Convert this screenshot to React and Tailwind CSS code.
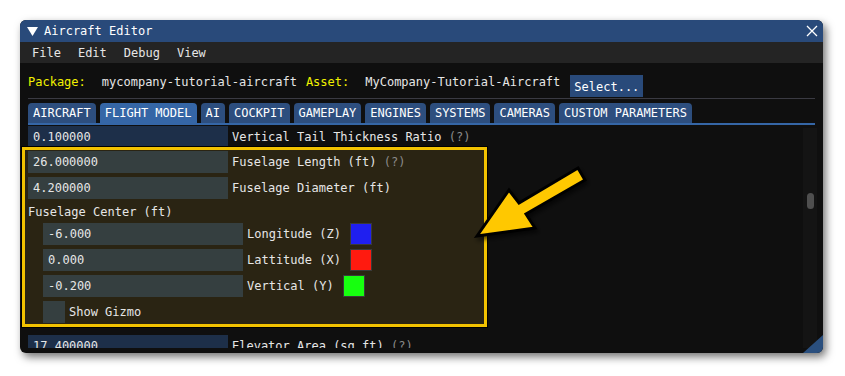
import React from 'react';

const mono = { fontFamily: '"DejaVu Sans Mono", "Liberation Mono", monospace' };

const tabs = ['AIRCRAFT', 'FLIGHT MODEL', 'AI', 'COCKPIT', 'GAMEPLAY', 'ENGINES', 'SYSTEMS', 'CAMERAS', 'CUSTOM PARAMETERS'];

const Field = ({ value, tone = 'navy', width = 'w-[200px]' }) => (
  <div
    className={`${width} h-[22px] shrink-0 flex items-center pl-[5px] ${tone === 'navy' ? 'bg-[#1d2f49]' : 'bg-[#353f40]'}`}
  >
    {value}
  </div>
);

const Help = () => <span className="text-[#8a8a8a]"> (?)</span>;

const Swatch = ({ color }) => (
  <div className={`w-[22px] h-[22px] ml-[9px] border border-[#3a3a3a] ${color}`} />
);

const App = () => {
  return (
    <div className="relative w-[845px] h-[376px] bg-white overflow-hidden text-[12px] text-[#e6e6e6]" style={mono}>
      <div className="absolute left-[20px] top-[20px] w-[803px] h-[333px] rounded-[6px] bg-[#0f0f0f] overflow-hidden flex flex-col shadow-[3px_4px_8px_rgba(0,0,0,0.55)]">
        {/* title bar */}
        <div className="h-[22px] shrink-0 bg-[#294a7a] flex items-center pl-[7px] pr-[5px]">
          <svg width="11" height="9" viewBox="0 0 11 9" className="mr-[6px]">
            <polygon points="0,0 11,0 5.5,9" fill="#ffffff" />
          </svg>
          <span className="text-white">Aircraft Editor</span>
          <div className="flex-1" />
          <svg width="12" height="12" viewBox="0 0 12 12">
            <path d="M1 1 L11 11 M11 1 L1 11" stroke="#ffffff" strokeWidth="1.3" />
          </svg>
        </div>

        {/* menu bar */}
        <div className="h-[21px] shrink-0 bg-[#242424] flex items-center pl-[12px] gap-[17px]">
          <span>File</span>
          <span>Edit</span>
          <span>Debug</span>
          <span>View</span>
        </div>

        {/* package row */}
        <div className="h-[35px] shrink-0 flex items-start pt-[12px] pl-[8px] leading-[14px]">
          <span className="text-[#f2f200]">Package:</span>
          <span className="ml-[16px]">mycompany-tutorial-aircraft</span>
          <span className="ml-[9px] text-[#f2f200]">Asset:</span>
          <span className="ml-[16px]">MyCompany-Tutorial-Aircraft</span>
          <div className="ml-[10px] h-[22px] px-[4px] bg-[#294a7a] flex items-start pt-[5px] text-white">Select...</div>
        </div>

        <div className="mx-[8px] h-px shrink-0 bg-[#3a3a42]" />

        {/* tabs */}
        <div className="mt-[4px] mx-[8px] h-[20px] shrink-0 flex gap-[4px]">
          {tabs.map((t) => (
            <div
              key={t}
              className={`h-full px-[5px] rounded-t-[4px] flex items-center leading-none text-white ${
                t === 'FLIGHT MODEL' ? 'bg-[#3566a6]' : 'bg-[#2d4e7e]'
              }`}
            >
              {t}
            </div>
          ))}
        </div>
        <div className="mx-[8px] h-[2px] shrink-0 bg-[#3566a6]" />

        {/* scrolling content */}
        <div className="h-[223px] shrink-0 flex">
          <div className="flex-1 overflow-hidden pl-[8px] pt-[1px] flex flex-col">
            <div className="flex items-center h-[21px] shrink-0">
              <Field value="0.100000" />
              <span className="ml-[4px]">
                Vertical Tail Thickness Ratio<Help />
              </span>
            </div>

            <div className="ml-[-6px] w-[465px] shrink-0 border-[3px] border-[#f2c200] outline outline-1 outline-black bg-[#2a2413] pt-px pb-px pl-[3px] flex flex-col gap-[4px]">
              <div className="flex items-center">
                <Field value="26.000000" tone="gray" />
                <span className="ml-[4px]">
                  Fuselage Length (ft)<Help />
                </span>
              </div>
              <div className="flex items-center">
                <Field value="4.200000" tone="gray" />
                <span className="ml-[4px]">Fuselage Diameter (ft)</span>
              </div>
              <div className="h-[16px] flex items-center pt-[2px]">Fuselage Center (ft)</div>
              <div className="flex items-center pl-[15px]">
                <Field value="-6.000" tone="gray" />
                <span className="ml-[4px]">Longitude (Z)</span>
                <Swatch color="bg-[#1f1ff0]" />
              </div>
              <div className="flex items-center pl-[15px]">
                <Field value="0.000" tone="gray" />
                <span className="ml-[4px]">Lattitude (X)</span>
                <Swatch color="bg-[#ff1a0f]" />
              </div>
              <div className="flex items-center pl-[15px]">
                <Field value="-0.200" tone="gray" />
                <span className="ml-[4px]">Vertical (Y)</span>
                <Swatch color="bg-[#17ff0f]" />
              </div>
              <div className="flex items-center pl-[15px]">
                <div className="w-[22px] h-[22px] bg-[#353f40]" />
                <span className="ml-[4px]">Show Gizmo</span>
              </div>
            </div>

            <div className="flex items-center h-[22px] shrink-0 mt-[8px]">
              <Field value="17.400000" />
              <span className="ml-[4px]">
                Elevator Area (sq ft)<Help />
              </span>
            </div>
          </div>

          {/* scrollbar */}
          <div className="w-[14px] mr-[6px] mt-[3px] bg-[#141414] flex justify-center">
            <div className="mt-[65px] w-[7px] h-[16px] rounded-[4px] bg-[#4f4f4f]" />
          </div>
        </div>

        {/* resize grip */}
        <svg width="20" height="18" viewBox="0 0 20 18" className="absolute right-0 bottom-0">
          <polygon points="0,18 20,18 20,0" fill="#2a4f7e" />
        </svg>
      </div>

      {/* annotation arrow */}
      <svg width="845" height="376" className="absolute left-0 top-0 pointer-events-none">
        <defs>
          <filter id="sh" x="-20%" y="-20%" width="140%" height="140%">
            <feDropShadow dx="2" dy="3" stdDeviation="2" floodColor="#000" floodOpacity="0.6" />
          </filter>
        </defs>
        <polygon
          points="477,236 509,190 519,203 578,168 585,180 526,214 535,228"
          fill="#ffc800"
          stroke="#000"
          strokeWidth="3"
          strokeLinejoin="miter"
          filter="url(#sh)"
        />
      </svg>
    </div>
  );
};

export default App;
